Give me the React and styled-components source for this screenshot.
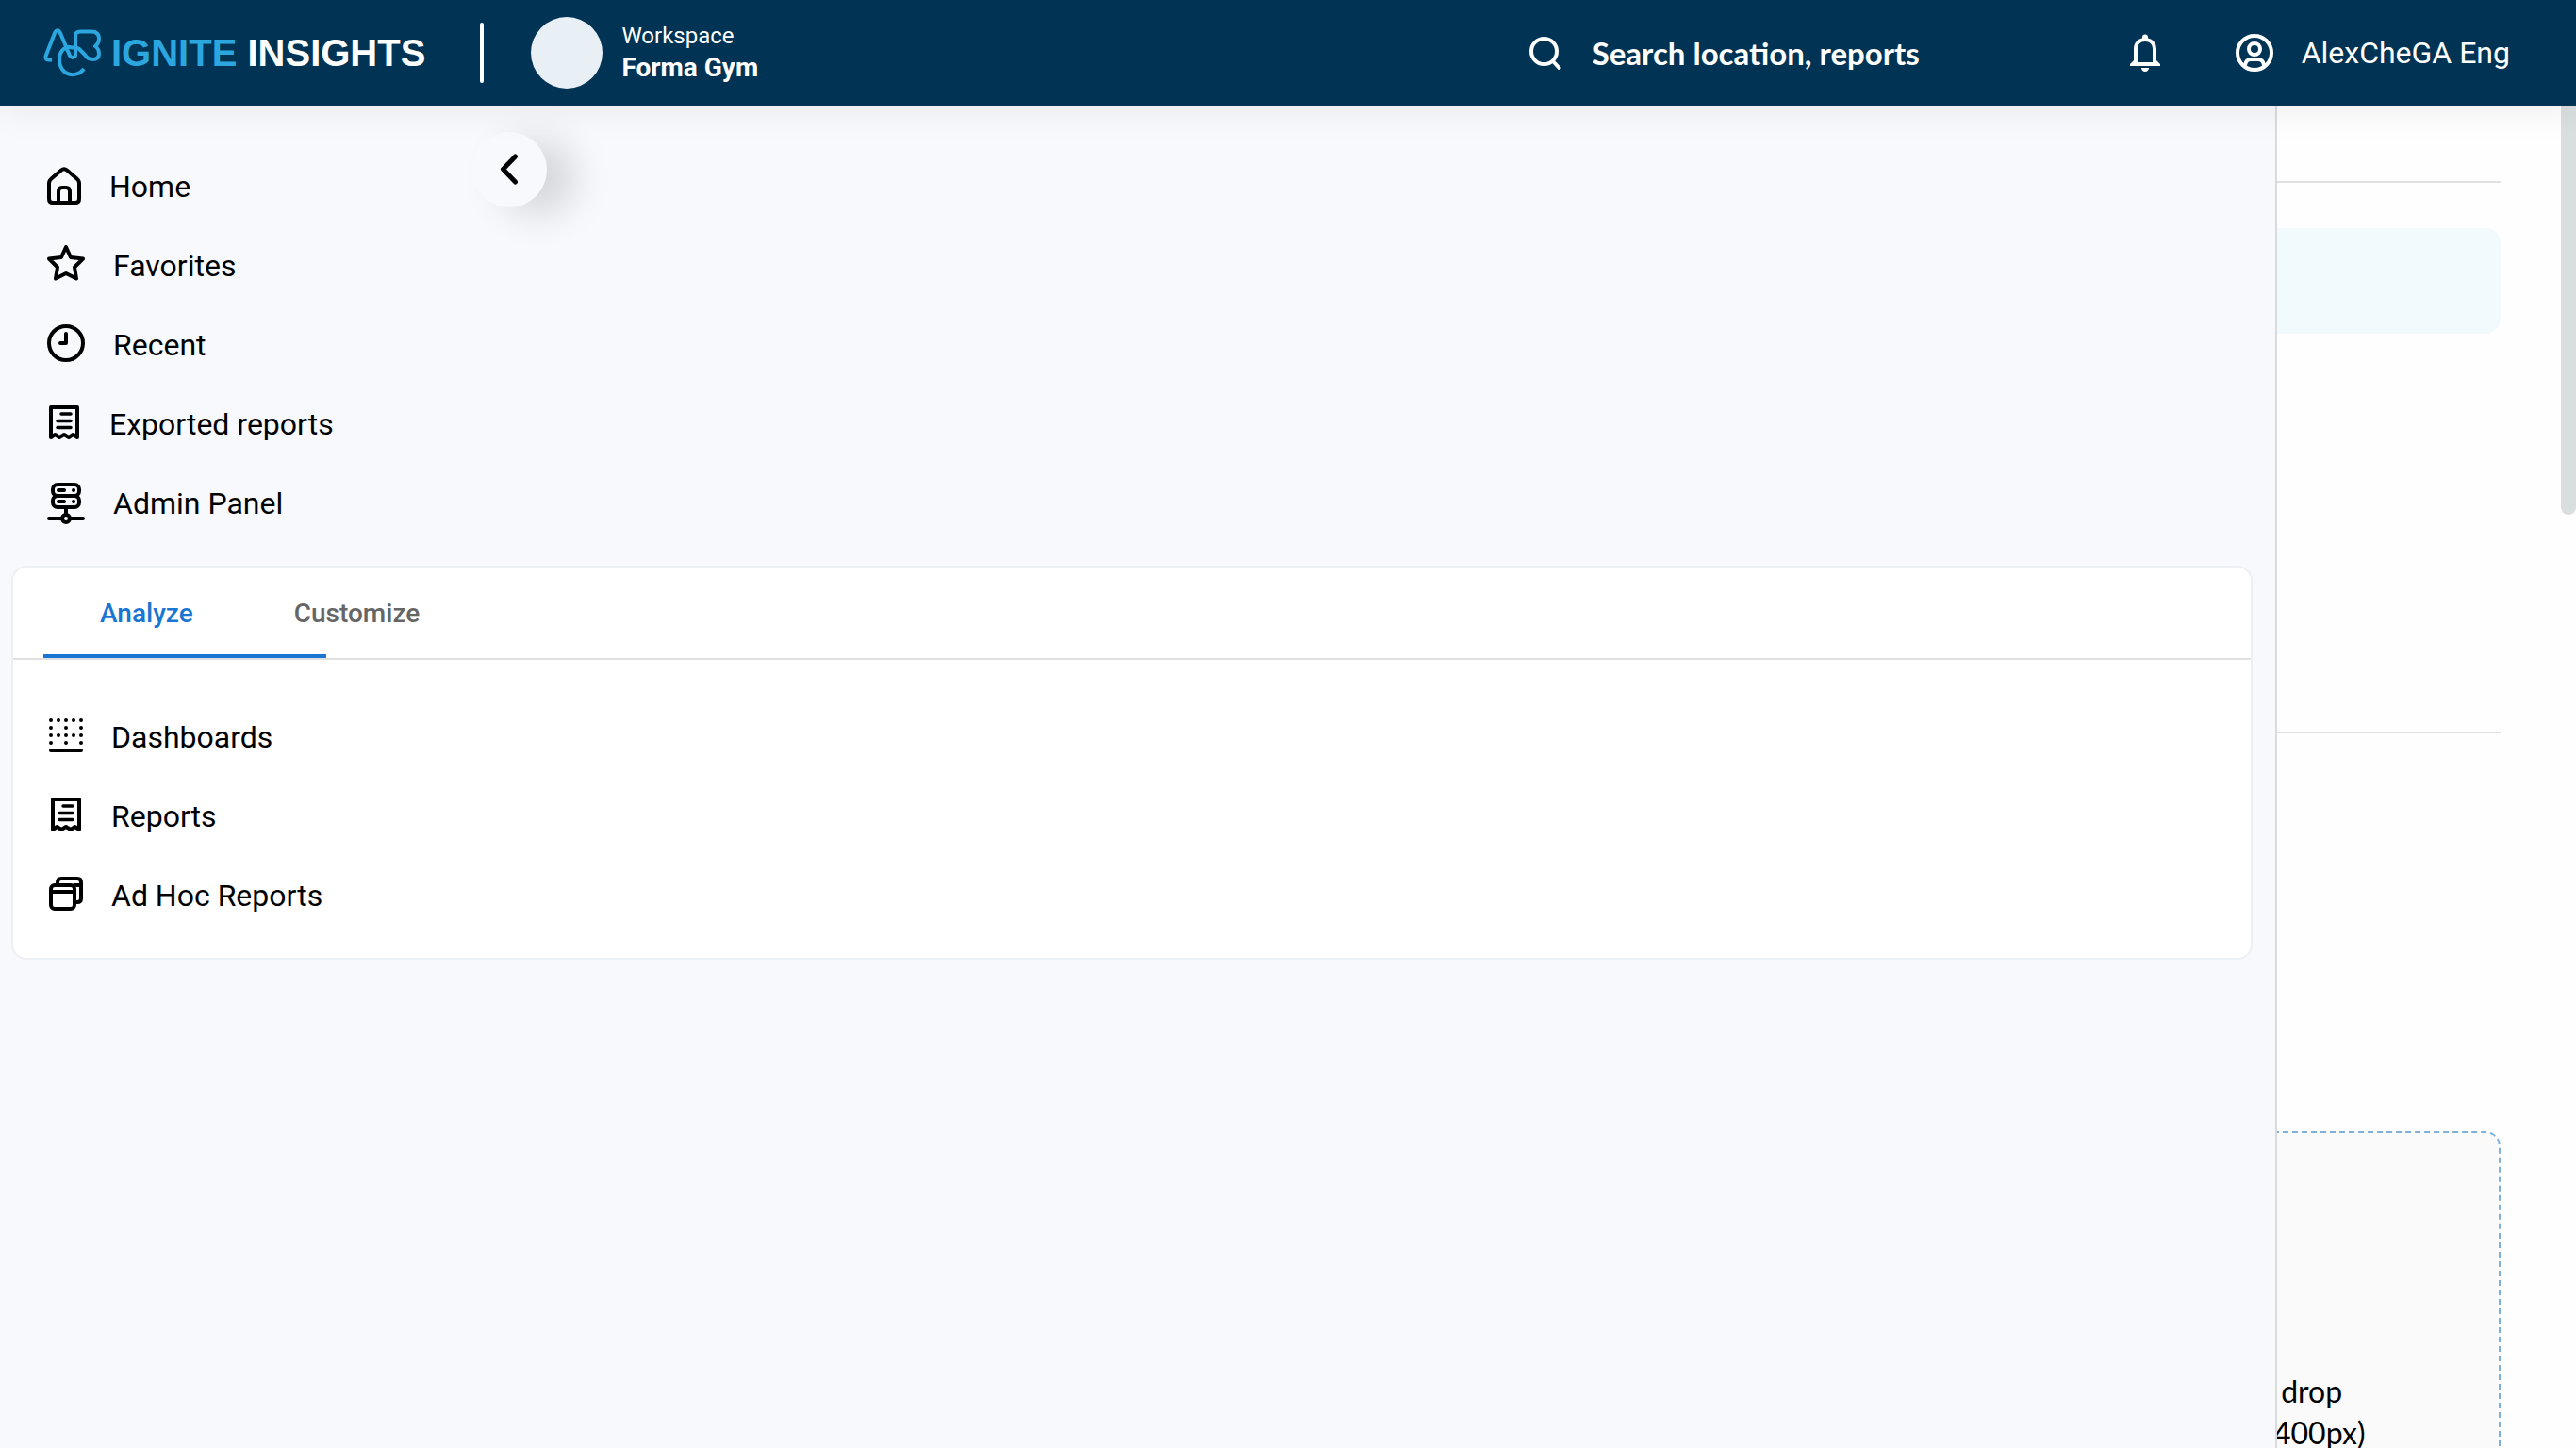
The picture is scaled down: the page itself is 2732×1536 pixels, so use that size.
import React from "react";
import styled, { createGlobalStyle } from "styled-components";

const GlobalStyle = createGlobalStyle`
  * { box-sizing: border-box; }
  body { margin: 0; background: #fefefe; color: #000; font-family: Roboto, "Liberation Sans", sans-serif; }
  button, input { font: inherit; color: inherit; border: 0; background: none; padding: 0; margin: 0; }
  button { cursor: pointer; }
  a { color: inherit; text-decoration: none; }
  svg { display: block; flex: none; }
`;

const Page = styled.div`
  display: flex;
  flex-direction: column;
  height: 100vh;
  overflow: hidden;
`;

const Header = styled.header`
  display: flex;
  align-items: center;
  flex: none;
  height: 112px;
  padding: 0 70px 0 46px;
  background: #003354;
  color: #fff;
  box-shadow: 0 4px 40px rgba(0, 0, 0, 0.07);
  position: relative;
  z-index: 2;
`;

const Logo = styled.a`
  display: flex;
  align-items: center;
  gap: 10px;
  font: 700 40px/48px "Liberation Sans", Arial, sans-serif;
  white-space: nowrap;
`;

const LogoAccent = styled.span`
  color: #2ba6df;
`;

const Divider = styled.span`
  width: 4px;
  height: 64px;
  margin: 0 50px 0 58px;
  border-radius: 2px;
  background: #fff;
`;

const Workspace = styled.div`
  display: flex;
  align-items: center;
  gap: 20px;
`;

const Avatar = styled.span`
  width: 76px;
  height: 76px;
  border-radius: 50%;
  background: #e8eff5;
`;

const WorkspaceText = styled.div`
  display: flex;
  flex-direction: column;
  padding-bottom: 2px;
`;

const WorkspaceLabel = styled.span`
  font-size: 24px;
  line-height: 34px;
`;

const WorkspaceName = styled.strong`
  font-size: 28px;
  line-height: 34px;
`;

const Search = styled.label`
  display: flex;
  align-items: center;
  gap: 32px;
  margin-left: auto;
`;

const SearchInput = styled.input`
  width: 570px;
  height: 48px;
  font: 700 33px/48px Lato, "Noto Sans", sans-serif;
  outline: 0;
  &::placeholder { color: #fff; opacity: 1; }
`;

const IconButton = styled.button`
  display: flex;
`;

const Account = styled.button`
  display: flex;
  align-items: center;
  gap: 30px;
  margin-left: 80px;
  font-size: 32px;
  line-height: 48px;
  white-space: nowrap;
`;

const Body = styled.div`
  display: flex;
  flex: 1;
  min-height: 0;
`;

const Sidebar = styled.aside`
  position: relative;
  flex: 1;
  min-width: 0;
  padding-top: 44px;
  background: #f8f9fd;
  border-right: 2px solid #d8dadd;
`;

const NavList = styled.nav`
  display: flex;
  flex-direction: column;
  padding: 0 ${(p) => p.$inset}px;
`;

const NavItem = styled.a`
  display: flex;
  align-items: center;
  gap: 30px;
  height: 84px;
  font-size: 32px;
  line-height: 48px;
`;

const Toggle = styled.button`
  position: absolute;
  top: 28px;
  left: 500px;
  display: flex;
  align-items: center;
  justify-content: center;
  width: 80px;
  height: 80px;
  border-radius: 50%;
  background: #f8f9fd;
  box-shadow: 30px 8px 40px rgba(0, 0, 0, 0.14);
`;

const Card = styled.section`
  margin: 24px 24px 0 12px;
  padding-bottom: 24px;
  background: #fff;
  border: 2px solid #eceff3;
  border-radius: 16px;
`;

const Tabs = styled.div`
  display: flex;
  padding-left: 32px;
  margin-bottom: 40px;
  border-bottom: 2px solid #e0e0e0;
`;

const Tab = styled.button`
  position: relative;
  height: 96px;
  padding: ${(p) => (p.$active ? "2px 107px 0 60px" : "2px 0 0 0")};
  color: ${(p) => (p.$active ? "#1976d2" : "#666")};
  font-weight: 500;
  font-size: 28px;
  line-height: 34px;

  &::after {
    content: "";
    display: ${(p) => (p.$active ? "block" : "none")};
    position: absolute;
    left: 0;
    bottom: 0;
    width: 300px;
    height: 4px;
    background: #1976d2;
  }
`;

const Main = styled.main`
  flex: none;
  width: 301px;
  padding: 80px 64px 0 0;
  overflow: hidden;
  display: flex;
  flex-direction: column;
`;

const Rule = styled.hr`
  flex: none;
  width: 100%;
  height: 2px;
  margin: 0;
  border: 0;
  background: #e0e0e0;
`;

const Notice = styled.div`
  flex: none;
  height: 112px;
  margin: 48px 0 422px;
  border-radius: 0 16px 16px 0;
  background: #f1fbfe;
`;

const DropZone = styled.div`
  flex: 1;
  margin: 422px 0 -20px -20px;
  padding: 252px 0 0 14px;
  border: 2px dashed #7fb0d8;
  border-radius: 16px;
  background: #fafafa;
  font: 400 32px/44px Lato, "Noto Sans", sans-serif;
  white-space: pre;
`;

const ScrollTrack = styled.div`
  flex: none;
  width: 16px;
`;

const ScrollThumb = styled.div`
  height: 434px;
  border-radius: 0 0 8px 8px;
  background: #d9dfde;
`;

const stroke = {
  fill: "none",
  stroke: "currentColor",
  strokeWidth: 4,
  strokeLinecap: "round",
  strokeLinejoin: "round",
  "aria-hidden": true,
};

const LogoMark = () => (
  <svg width="62" height="54" viewBox="0 0 62 54" {...stroke} stroke="#2ba6df">
    <path strokeLinecap="butt" d="M9 34.500H5.500Q1.500 34.500 2.700 30L12 6Q15 .5 18 6L28 30Q31 34 34 30V9Q34 4.500 39 4.500H51Q59 4.500 59 12Q59 17 55 20Q59 23 59 28Q59 34 52 34Q47 34 44 29L38 23Q34 20.500 31 21.500C22 19 17 26 17 34C17 51 35 55 43 44" />
  </svg>
);

const SearchIcon = () => (
  <svg width="36" height="36" viewBox="0 0 36 36" {...stroke}>
    <circle cx="16.500" cy="16.500" r="13.500" />
    <path d="M26 27L32.500 34" />
  </svg>
);

const BellIcon = () => (
  <svg width="32" height="40" viewBox="0 0 32 40" fill="currentColor" aria-hidden="true">
    <path d="M0 34V32L4 28V16C4 9.500 8 5.500 13 4.500V3.500a3 3 0 0 1 6 0V4.500C24 5.500 28 9.500 28 16V28L32 32V34ZM8 30H24V16C24 11 21 8 16 8S8 11 8 16ZM12 36H20C20 38 18.500 40 16 40S12 38 12 36Z" />
  </svg>
);

const UserIcon = () => (
  <svg width="40" height="40" viewBox="0 0 40 40" {...stroke}>
    <circle cx="20" cy="20" r="18" />
    <circle cx="20" cy="16" r="6" />
    <path d="M10 33Q11 27 16 27H24Q29 27 30 33" />
  </svg>
);

const ChevronIcon = () => (
  <svg width="20" height="34" viewBox="0 0 20 34" {...stroke} strokeWidth="5">
    <path d="M16.500 3L3.500 16.500L16.500 30" />
  </svg>
);

const HomeIcon = () => (
  <svg width="36" height="44" viewBox="0 0 36 44" {...stroke}>
    <path d="M2 18.500Q2 15.500 4.500 13.500L15 4.500Q18 2 21 4.500L31.500 13.500Q34 15.500 34 18.500V35Q34 39 30 39H6Q2 39 2 35Z" />
    <path d="M12 39V27Q12 23 16 23H20Q24 23 24 27V39" />
  </svg>
);

const StarIcon = () => (
  <svg width="40" height="44" viewBox="0 0 40 44" {...stroke}>
    <path d="M20 2L25 13L38 14.500L29 23.500L31 35.500L20 30L9 35.500L11 23.500L2 14.500L15 13Z" />
  </svg>
);

const ClockIcon = () => (
  <svg width="40" height="44" viewBox="0 0 40 44" {...stroke}>
    <circle cx="20" cy="20" r="18" />
    <path d="M20 10V20H14" />
  </svg>
);

const ReceiptIcon = () => (
  <svg width="36" height="44" viewBox="0 0 36 44" {...stroke}>
    <path d="M4 36V4H32V36L27.500 33L23 36L18 33L13 36L8.500 33Z" />
    <path strokeWidth="3.500" d="M15 11H25M11 18.500H25M11 25.500H25" />
  </svg>
);

const ServerIcon = () => (
  <svg width="40" height="44" viewBox="0 0 40 44" {...stroke}>
    <rect x="6" y="0" width="28" height="12" rx="5" transform="translate(0 2)" />
    <rect x="6" y="14" width="28" height="12" rx="5" />
    <path d="M12 8H18M28 8H28.100M12 20H18M28 20H28.100M20 26V34M2 38H15M25 38H38" />
    <circle cx="20" cy="38" r="4" />
  </svg>
);

const DOTS = [
  [2, [0, 1, 2, 3, 4]],
  [10, [0, 2, 4]],
  [18, [0, 1, 2, 3, 4]],
  [26, [0, 2, 4]],
];

const DashboardIcon = () => (
  <svg width="36" height="44" viewBox="0 0 36 44" {...stroke}>
    {DOTS.map(([y, columns]) =>
      columns.map((c) => (
        <circle key={`${y}-${c}`} cx={2 + c * 8} cy={y + 2} r="2" fill="currentColor" stroke="none" />
      ))
    )}
    <path d="M2 36H34" />
  </svg>
);

const WindowsIcon = () => (
  <svg width="36" height="44" viewBox="0 0 36 44" {...stroke}>
    <rect x="2" y="11" width="25" height="25" rx="4" />
    <path d="M2 18H27M9 11V8Q9 4 13 4H30Q34 4 34 8V25Q34 29 30 29H27M27 11H34" />
  </svg>
);

const MAIN_NAV = [
  ["Home", HomeIcon],
  ["Favorites", StarIcon],
  ["Recent", ClockIcon],
  ["Exported reports", ReceiptIcon],
  ["Admin Panel", ServerIcon],
];

const ANALYZE_NAV = [
  ["Dashboards", DashboardIcon],
  ["Reports", ReceiptIcon],
  ["Ad Hoc Reports", WindowsIcon],
];

const NavLinks = ({ items, inset, label }) => (
  <NavList $inset={inset} aria-label={label}>
    {items.map(([text, Icon]) => (
      <NavItem key={text} href="#">
        <Icon />
        {text}
      </NavItem>
    ))}
  </NavList>
);

export default function App() {
  return (
    <Page>
      <GlobalStyle />
      <Header>
        <Logo href="#">
          <LogoMark />
          <span>
            <LogoAccent>IGNITE</LogoAccent> INSIGHTS
          </span>
        </Logo>
        <Divider />
        <Workspace>
          <Avatar />
          <WorkspaceText>
            <WorkspaceLabel>Workspace</WorkspaceLabel>
            <WorkspaceName>Forma Gym</WorkspaceName>
          </WorkspaceText>
        </Workspace>
        <Search>
          <SearchIcon />
          <SearchInput type="search" placeholder="Search location, reports" />
        </Search>
        <IconButton aria-label="Notifications">
          <BellIcon />
        </IconButton>
        <Account>
          <UserIcon />
          AlexCheGA Eng
        </Account>
      </Header>
      <Body>
        <Sidebar>
          <NavLinks items={MAIN_NAV} inset={50} label="Main" />
          <Toggle aria-label="Collapse menu">
            <ChevronIcon />
          </Toggle>
          <Card>
            <Tabs role="tablist">
              <Tab role="tab" aria-selected="true" $active>
                Analyze
              </Tab>
              <Tab role="tab" aria-selected="false">
                Customize
              </Tab>
            </Tabs>
            <NavLinks items={ANALYZE_NAV} inset={38} label="Analyze" />
          </Card>
        </Sidebar>
        <Main>
          <Rule />
          <Notice />
          <Rule />
          <DropZone>{"\u00a0drop\n400px)"}</DropZone>
        </Main>
        <ScrollTrack>
          <ScrollThumb />
        </ScrollTrack>
      </Body>
    </Page>
  );
}
